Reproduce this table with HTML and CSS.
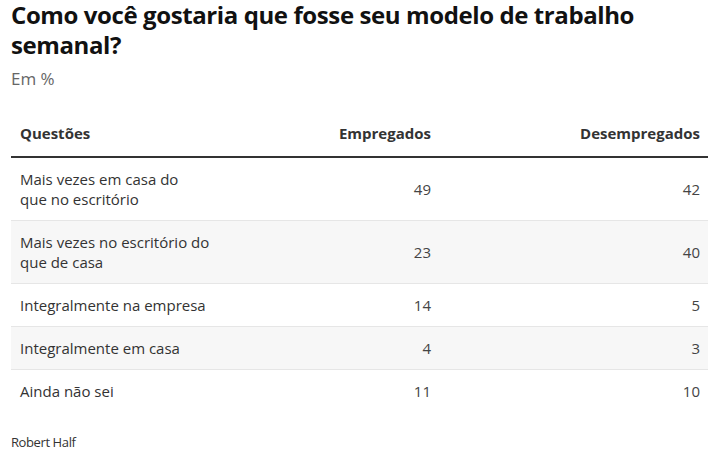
FILE: index.html
```html
<!DOCTYPE html>
<html lang="pt-BR">
<head>
<meta charset="utf-8">
<title>Modelo de trabalho</title>
<link rel="stylesheet" href="styles.css">
</head>
<body>
<div class="chart">
  <h1 class="title">Como você gostaria que fosse seu modelo de trabalho semanal?</h1>
  <p class="subtitle">Em %</p>
  <table class="data">
    <colgroup>
      <col class="c1"><col class="c2"><col class="c3">
    </colgroup>
    <thead>
      <tr><th class="lbl">Questões</th><th class="num">Empregados</th><th class="num">Desempregados</th></tr>
    </thead>
    <tbody>
      <tr><td class="lbl">Mais vezes em casa do<br>que no escritório</td><td class="num">49</td><td class="num">42</td></tr>
      <tr><td class="lbl">Mais vezes no escritório do<br>que de casa</td><td class="num">23</td><td class="num">40</td></tr>
      <tr><td class="lbl">Integralmente na empresa</td><td class="num">14</td><td class="num">5</td></tr>
      <tr><td class="lbl">Integralmente em casa</td><td class="num">4</td><td class="num">3</td></tr>
      <tr><td class="lbl">Ainda não sei</td><td class="num">11</td><td class="num">10</td></tr>
    </tbody>
  </table>
  <p class="source">Robert Half</p>
</div>
</body>
</html>
```
FILE: styles.css
```css
html, body {
  margin: 0;
  padding: 0;
  background: #fff;
}
body {
  font-family: "Open Sans", "Liberation Sans", sans-serif;
  color: #333;
  overflow: hidden;
}
.chart {
  padding: 0 12px 0 11px;
}
.title {
  margin: 0;
  font-size: 24px;
  line-height: 30px;
  font-weight: 700;
  color: #111;
  letter-spacing: -0.4px;
}
.subtitle {
  margin: 9px 0 0 0;
  font-size: 17px;
  line-height: 20px;
  color: #666;
}
.data {
  width: 697px;
  margin-top: 23px;
  border-collapse: collapse;
  table-layout: fixed;
  font-size: 15px;
  line-height: 20px;
}
.c1 { width: 218px; }
.c2 { width: 210px; }
.c3 { width: 269px; }
.data th {
  font-weight: 700;
  color: #333;
  padding: 11px 8px 13px 9px;
  border-bottom: 2px solid #333;
}
.data td {
  padding: 11px 8px 11px 9px;
  color: #333;
  border-bottom: 1px solid #e6e6e6;
}
.data tbody tr:nth-child(even) td {
  background: #f7f7f7;
}
.data tbody tr:last-child td {
  border-bottom: none;
}
.lbl { text-align: left; }
.num { text-align: right; }
.data td.num { color: #444; }
.source {
  margin: 22px 0 0 0;
  font-size: 13px;
  line-height: 16px;
  letter-spacing: -0.4px;
  color: #333;
}
```
